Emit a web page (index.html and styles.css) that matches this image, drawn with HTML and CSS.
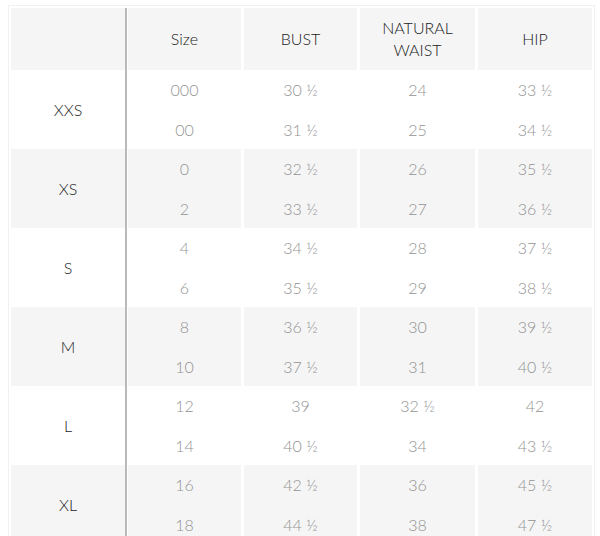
FILE: index.html
```html
<!DOCTYPE html>
<html>
<head>
<meta charset="utf-8">
<link rel="stylesheet" href="styles.css">
</head>
<body>
<div class="frame">
  <div class="chart">
    <div class="cell head c1"></div>
    <div class="cell head c2">Size</div>
    <div class="cell head c3">BUST</div>
    <div class="cell head c3 c4">NATURAL<br>WAIST</div>
    <div class="cell head c3 c5">HIP</div>

    <div class="cell label c1">XXS</div>
    <div class="cell c2">000</div><div class="cell c3">30 ½</div><div class="cell c3">24</div><div class="cell c3">33 ½</div>
    <div class="cell c2">00</div><div class="cell c3">31 ½</div><div class="cell c3">25</div><div class="cell c3">34 ½</div>

    <div class="cell label c1 alt">XS</div>
    <div class="cell c2 alt">0</div><div class="cell c3 alt">32 ½</div><div class="cell c3 alt">26</div><div class="cell c3 alt">35 ½</div>
    <div class="cell c2 alt">2</div><div class="cell c3 alt">33 ½</div><div class="cell c3 alt">27</div><div class="cell c3 alt">36 ½</div>

    <div class="cell label c1">S</div>
    <div class="cell c2">4</div><div class="cell c3">34 ½</div><div class="cell c3">28</div><div class="cell c3">37 ½</div>
    <div class="cell c2">6</div><div class="cell c3">35 ½</div><div class="cell c3">29</div><div class="cell c3">38 ½</div>

    <div class="cell label c1 alt">M</div>
    <div class="cell c2 alt">8</div><div class="cell c3 alt">36 ½</div><div class="cell c3 alt">30</div><div class="cell c3 alt">39 ½</div>
    <div class="cell c2 alt">10</div><div class="cell c3 alt">37 ½</div><div class="cell c3 alt">31</div><div class="cell c3 alt">40 ½</div>

    <div class="cell label c1">L</div>
    <div class="cell c2">12</div><div class="cell c3">39</div><div class="cell c3">32 ½</div><div class="cell c3">42</div>
    <div class="cell c2">14</div><div class="cell c3">40 ½</div><div class="cell c3">34</div><div class="cell c3">43 ½</div>

    <div class="cell label c1 alt">XL</div>
    <div class="cell c2 alt">16</div><div class="cell c3 alt">42 ½</div><div class="cell c3 alt">36</div><div class="cell c3 alt">45 ½</div>
    <div class="cell c2 alt">18</div><div class="cell c3 alt">44 ½</div><div class="cell c3 alt">38</div><div class="cell c3 alt">47 ½</div>
  </div>
</div>
</body>
</html>
```

FILE: styles.css
```css
html, body {
  margin: 0;
  padding: 0;
  background: #ffffff;
  overflow: hidden;
}

body {
  font-family: "Lato", "Liberation Sans", sans-serif;
  font-size: 16px;
  font-weight: 300;
}

.frame {
  margin: 5px 0 0 8px;
  width: 581px;
  padding: 2px 2px 0 2px;
  border: 1px solid #f1f1f1;
  border-bottom: 0;
}

.chart {
  display: grid;
  grid-template-columns: 116px 114px 116px 118px 117px;
  grid-template-rows: 62px repeat(12, 39.5px);
  background: #ffffff;
}

.cell {
  display: flex;
  align-items: center;
  justify-content: center;
  text-align: center;
  color: #939393;
  background-color: #ffffff;
  background-clip: padding-box;
}

.cell.alt,
.cell.head {
  background-color: #f5f5f5;
}

.head {
  color: #222222;
  line-height: 22px;
}

.c1 {
  border-right: 2px solid #b9b9b9;
}

.c2 {
  border-left: 1px solid #ffffff;
}

.c3 {
  border-left: 3px solid #ffffff;
}

.label {
  grid-row: span 2;
  color: #222222;
}
```
